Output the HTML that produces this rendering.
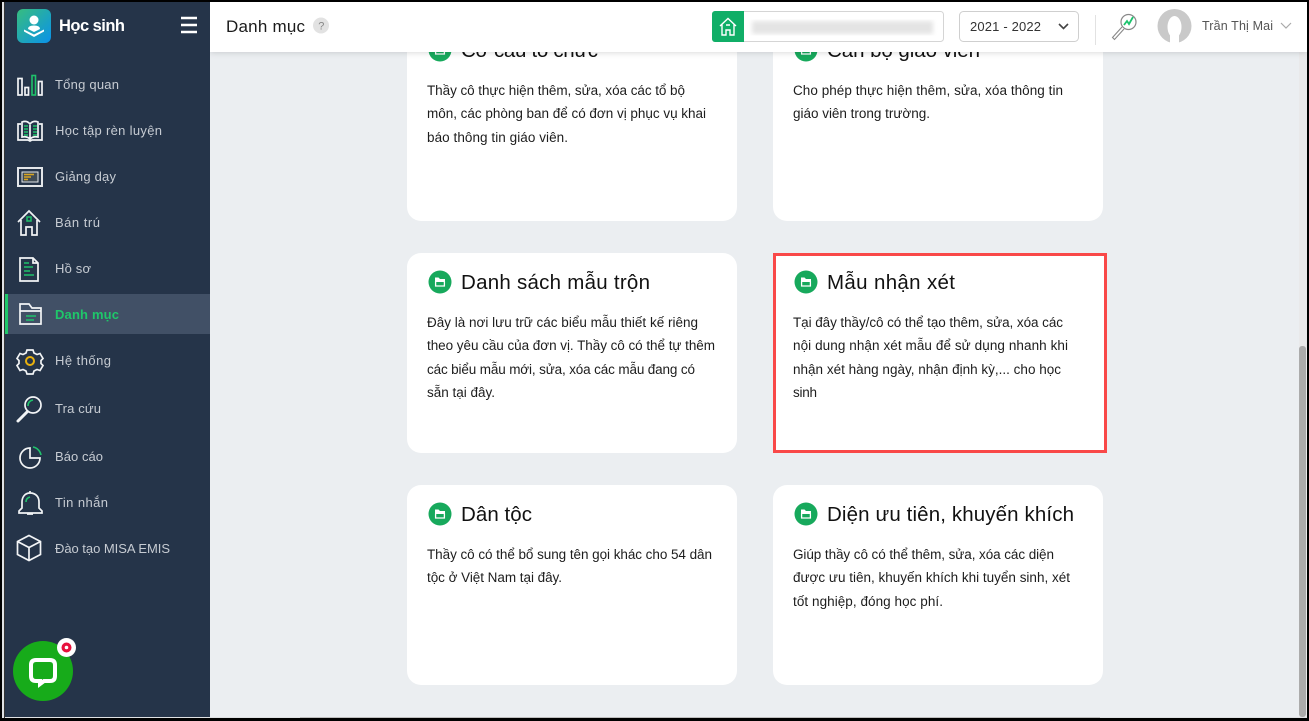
<!DOCTYPE html>
<html lang="vi"><head><meta charset="utf-8"><title>Danh mục</title>
<style>
html,body{margin:0;padding:0;width:1309px;height:721px;overflow:hidden;background:#000}
svg{display:block}
text{font-family:"Liberation Sans","Noto Sans CJK JP",sans-serif}
.b{font-size:13.5px;fill:#1d1d1d}
.t{font-size:20.5px;fill:#111}
.n{font-size:13px;fill:#c6cbd2}
.i{fill:none;stroke:#f2f4f6;stroke-width:1.7}
.g{fill:none;stroke:#1fc26b;stroke-width:1.6}
</style></head><body>
<svg width="1309" height="721" viewBox="0 0 1309 721" xmlns="http://www.w3.org/2000/svg">
<defs>
<linearGradient id="lg" x1="0" y1="0" x2="1" y2="1"><stop offset="0" stop-color="#37bd7f"/><stop offset="1" stop-color="#0a92ea"/></linearGradient>
<filter id="sh" x="-5%" y="-50%" width="110%" height="220%"><feDropShadow dx="0" dy="1" stdDeviation="3" flood-color="#000" flood-opacity=".14"/></filter>
<filter id="bl"><feGaussianBlur stdDeviation="2.5"/></filter>
<g id="fi"><circle r="11.500" fill="#17a95c"/><path d="M-5-4.500h3.500l1.500 1.500h5v3h-10z" fill="#fff"/><path d="M-4.400-1v5h8.800v-5" fill="none" stroke="#fff" stroke-width="1.300"/></g>
</defs>
<rect width="1309" height="721" fill="#000"/>
<rect x="2" y="2" width="1305" height="716" fill="#dfe1e3"/>
<rect x="4" y="2" width="1" height="716" fill="#333"/>
<rect x="5" y="2" width="1302" height="715" fill="#ebeef1"/>
<rect x="1299" y="52" width="8" height="665" fill="#e9e9ea"/>
<rect x="1299" y="346" width="7" height="371" rx="3" fill="#ababab"/>
<path d="M300 717.500h800" stroke="#bdbdbd" stroke-width="1"/>

<!-- cards -->
<rect x="407" y="21" width="330" height="200" rx="14" fill="#fff"/>
<rect x="773" y="21" width="330" height="200" rx="14" fill="#fff"/>
<rect x="407" y="253" width="330" height="200" rx="14" fill="#fff"/>
<rect x="407" y="485" width="330" height="200" rx="14" fill="#fff"/>
<rect x="773" y="485" width="330" height="200" rx="14" fill="#fff"/>
<rect x="774.500" y="254.500" width="331" height="197" fill="#fff" stroke="#f94848" stroke-width="3"/>

<use href="#fi" x="440" y="50"/><text class="t" x="461" y="57" textLength="137" lengthAdjust="spacing">Cơ cấu tổ chức</text>
<use href="#fi" x="806" y="50"/><text class="t" x="827" y="57" textLength="153" lengthAdjust="spacing">Cán bộ giáo viên</text>
<text class="b" x="427" y="95" textLength="258" lengthAdjust="spacing">Thầy cô thực hiện thêm, sửa, xóa các tổ bộ</text>
<text class="b" x="427" y="118" textLength="279" lengthAdjust="spacing">môn, các phòng ban để có đơn vị phục vụ khai</text>
<text class="b" x="427" y="142" textLength="141" lengthAdjust="spacing">báo thông tin giáo viên.</text>
<text class="b" x="793" y="95" textLength="270" lengthAdjust="spacing">Cho phép thực hiện thêm, sửa, xóa thông tin</text>
<text class="b" x="793" y="118" textLength="137" lengthAdjust="spacing">giáo viên trong trường.</text>

<use href="#fi" x="440" y="282"/><text class="t" x="461" y="289" textLength="189" lengthAdjust="spacing">Danh sách mẫu trộn</text>
<text class="b" x="427" y="327" textLength="271" lengthAdjust="spacing">Đây là nơi lưu trữ các biểu mẫu thiết kế riêng</text>
<text class="b" x="427" y="350" textLength="288" lengthAdjust="spacing">theo yêu cầu của đơn vị. Thầy cô có thể tự thêm</text>
<text class="b" x="427" y="374" textLength="268" lengthAdjust="spacing">các biểu mẫu mới, sửa, xóa các mẫu đang có</text>
<text class="b" x="427" y="397" textLength="68" lengthAdjust="spacing">sẵn tại đây.</text>

<use href="#fi" x="806" y="282"/><text class="t" x="827" y="289" textLength="128" lengthAdjust="spacing">Mẫu nhận xét</text>
<text class="b" x="793" y="327" textLength="270" lengthAdjust="spacing">Tại đây thầy/cô có thể tạo thêm, sửa, xóa các</text>
<text class="b" x="793" y="350" textLength="275" lengthAdjust="spacing">nội dung nhận xét mẫu để sử dụng nhanh khi</text>
<text class="b" x="793" y="374" textLength="268" lengthAdjust="spacing">nhận xét hàng ngày, nhận định kỳ,... cho học</text>
<text class="b" x="793" y="397" textLength="24" lengthAdjust="spacing">sinh</text>

<use href="#fi" x="440" y="514"/><text class="t" x="461" y="521" textLength="71" lengthAdjust="spacing">Dân tộc</text>
<text class="b" x="427" y="559" textLength="285" lengthAdjust="spacing">Thầy cô có thể bổ sung tên gọi khác cho 54 dân</text>
<text class="b" x="427" y="582" textLength="135" lengthAdjust="spacing">tộc ở Việt Nam tại đây.</text>

<use href="#fi" x="806" y="514"/><text class="t" x="827" y="521" textLength="247" lengthAdjust="spacing">Diện ưu tiên, khuyến khích</text>
<text class="b" x="793" y="559" textLength="261" lengthAdjust="spacing">Giúp thầy cô có thể thêm, sửa, xóa các diện</text>
<text class="b" x="793" y="582" textLength="277" lengthAdjust="spacing">được ưu tiên, khuyến khích khi tuyển sinh, xét</text>
<text class="b" x="793" y="606" textLength="150" lengthAdjust="spacing">tốt nghiệp, đóng học phí.</text>

<!-- header -->
<rect x="210" y="2" width="1097" height="50" fill="#fff" filter="url(#sh)"/>
<text x="226" y="32" font-size="17" fill="#1b1b1b" textLength="79" lengthAdjust="spacing">Danh mục</text>
<circle cx="321" cy="25.500" r="8" fill="#e2e2e2"/><text x="318.300" y="29.500" font-size="11" fill="#888">?</text>
<rect x="712.500" y="11.500" width="231" height="30" rx="3" fill="#fff" stroke="#d5d5d5"/>
<path d="M715 11h29v31h-29a3 3 0 0 1-3-3v-25a3 3 0 0 1 3-3z" fill="#10ae67"/>
<path d="M720 26l8-7.500 8 7.500M722 24.500v10.500h4v-5h4v5h4v-10.500M726 25h4" fill="none" stroke="#fff" stroke-width="1.400"/>
<rect x="752" y="21" width="181" height="13" fill="#e4e4e4" filter="url(#bl)"/>
<rect x="959.500" y="11.500" width="119" height="30" rx="4" fill="#fff" stroke="#cfcfcf"/>
<text x="970" y="31" font-size="13" fill="#333" textLength="71" lengthAdjust="spacing">2021 - 2022</text>
<path d="M1059 24l4.500 4.500 4.500-4.500" fill="none" stroke="#444" stroke-width="1.600"/>
<rect x="1095" y="15" width="1" height="30" fill="#e2e2e2"/>
<circle cx="1128.500" cy="22" r="7.500" fill="#fff" stroke="#888" stroke-width="1.200"/>
<path d="M1124 25l3-4 2 3 4-7" fill="none" stroke="#1cc36d" stroke-width="1.800"/>
<path d="M1122 27l-9.500 10.500 2 2 9.500-10.500" fill="#fff" stroke="#888" stroke-width="1.100"/>
<circle cx="1174.500" cy="26" r="17" fill="#c9c9c9"/>
<ellipse cx="1174.500" cy="27" rx="7" ry="11" fill="#fff"/><rect x="1170" y="30" width="9" height="13" fill="#fff"/>
<text x="1202" y="30" font-size="12.500" fill="#555" textLength="71" lengthAdjust="spacing">Trần Thị Mai</text>
<path d="M1281 23l5 5 5-5" fill="none" stroke="#aaa" stroke-width="1.200"/>

<!-- sidebar -->
<rect x="5" y="2" width="205" height="715" fill="#253449"/>
<rect x="5" y="294" width="205" height="40" fill="#415066"/>
<rect x="5" y="294" width="3" height="40" fill="#1fc76a"/>
<rect x="17" y="9" width="34" height="34" rx="6" fill="url(#lg)"/>
<circle cx="34" cy="20" r="4.500" fill="#fff"/>
<path d="M28 29q0-3.500 6-3.500t6 3.500l-6 3z" fill="#fff"/>
<path d="M24 29.500l10 5 10-5v2l-10 5.500-10-5.500z" fill="#fff"/>
<text x="59" y="31" font-size="16.500" font-weight="700" fill="#fff" textLength="66" lengthAdjust="spacing">Học sinh</text>
<path d="M181 18h16M181 25h16M181 32h16" stroke="#fff" stroke-width="2.500"/>

<text class="n" x="55" y="89" textLength="64" lengthAdjust="spacing">Tổng quan</text>
<text class="n" x="55" y="135" textLength="107" lengthAdjust="spacing">Học tập rèn luyện</text>
<text class="n" x="55" y="181" textLength="61" lengthAdjust="spacing">Giảng dạy</text>
<text class="n" x="55" y="227" textLength="45" lengthAdjust="spacing">Bán trú</text>
<text class="n" x="55" y="273" textLength="36" lengthAdjust="spacing">Hồ sơ</text>
<text x="55" y="319" font-size="13" font-weight="700" fill="#1fc76a" textLength="64" lengthAdjust="spacing">Danh mục</text>
<text class="n" x="55" y="365" textLength="56" lengthAdjust="spacing">Hệ thống</text>
<text class="n" x="55" y="413" textLength="46" lengthAdjust="spacing">Tra cứu</text>
<text class="n" x="55" y="461" textLength="48" lengthAdjust="spacing">Báo cáo</text>
<text class="n" x="55" y="507" textLength="53" lengthAdjust="spacing">Tin nhắn</text>
<text class="n" x="55" y="553" textLength="115" lengthAdjust="spacing">Đào tạo MISA EMIS</text>

<!-- nav icons -->
<rect class="i" x="18" y="78.500" width="4" height="16.500"/><rect class="i" x="25" y="87.500" width="3.500" height="7.500"/><rect class="g" x="32" y="75.500" width="3.500" height="19.500" stroke-width="2"/><rect class="i" x="38.500" y="81.500" width="3.500" height="13.500"/>

<path class="i" d="M21 124h-3v16h10l2 1 2-1h10v-16h-3M30 125v15M22 122q5-2 8 2 3-4 8-2v15q-5-1-8 2-3-3-8-2z"/>
<path class="g" d="M24 126h4M24 129h4M24 132h4M24 135h4M33 126h4M33 129h4M33 132h4M33 135h4"/>

<rect x="18" y="168" width="24" height="18" fill="none" stroke="#e3e6e9" stroke-width="2"/><rect x="22" y="172" width="16" height="10" fill="#3e4a55" stroke="#e3e6e9" stroke-width="1"/>
<path d="M24 174.500h10M24 177h7M24 179.500h4" stroke="#d9a521" stroke-width="1.600"/>

<path class="i" d="M18 222l11-11 11 11M21 220v15h5v-8h6v8h5v-15"/><rect x="27" y="217" width="4" height="4" fill="none" stroke="#1fc26b" stroke-width="1.500"/>

<path class="i" d="M20 258h13l5 5v18h-18zM33 258v5h5"/><path class="g" d="M24 263h5M24 267h9M24 271h6M24 275h10"/>

<path class="i" d="M20 304h9l3 4h9v16h-21zM20 311h21"/><path class="g" d="M26 316h10M26 320h8"/>

<path class="i" d="M27 350h6l1 3 3 1.500 3-1 3 5-2 2v3l2 2-3 5-3-1-3 1.500-1 3h-6l-1-3-3-1.500-3 1-3-5 2-2v-3l-2-2 3-5 3 1 3-1.500z"/><circle cx="30" cy="361" r="4" fill="none" stroke="#e9b10f" stroke-width="2"/>

<circle class="i" cx="33" cy="405" r="8"/><path d="M18 421l9-9" stroke="#f2f4f6" stroke-width="3" stroke-linecap="round"/><path class="g" d="M28 406q0-5 5-6"/>

<path class="i" d="M30 448a10 10 0 1 0 10 10h-10z"/><path class="g" d="M33 447a10 10 0 0 1 8 8"/>

<path class="i" d="M30 491v2M30 493c-5 0-8 4-8 9v6l-3 3v2h23v-2l-3-3v-6c0-5-3-9-9-9zM27 514h6"/><path class="g" d="M26 502q0-4 4-5"/>

<path class="i" d="M29 535.500l11.500 6v13l-11.500 6-11.500-6v-13zM17.500 541.500l11.500 6 11.500-6M29 547.500v13"/>

<!-- chat -->
<circle cx="43" cy="671" r="30" fill="#17ab1a"/>
<path d="M36 660h14q5 0 5 5v11q0 5-5 5h-6l-4 3v-3h-4q-5 0-5-5v-11q0-5 5-5z" fill="none" stroke="#fff" stroke-width="4"/>
<circle cx="66.500" cy="647.500" r="9.500" fill="#fff"/><circle cx="66.500" cy="647.500" r="5" fill="#e8103c"/><circle cx="66.500" cy="647.500" r="1.800" fill="#fff"/>
</svg>
</body></html>
